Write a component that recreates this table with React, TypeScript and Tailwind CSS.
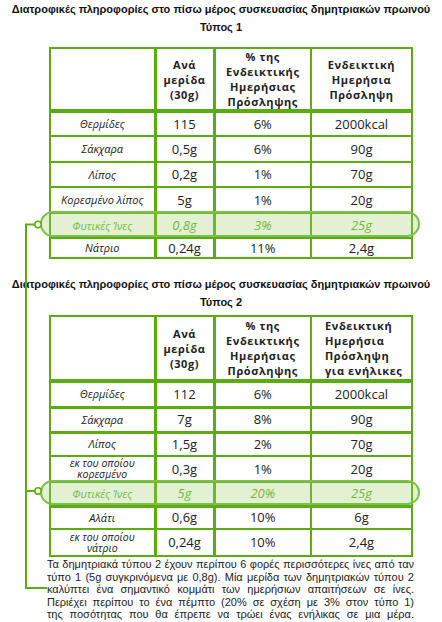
const G = '#5aac0f'

type Row = { label: string; small?: boolean; a: string; b: string; c: string; fiber?: boolean; h: number; thick?: boolean }

const rows1: Row[] = [
  { label: 'Θερμίδες', a: '115', b: '6%', c: '2000kcal', h: 25 },
  { label: 'Σάκχαρα', a: '0,5g', b: '6%', c: '90g', h: 26 },
  { label: 'Λίπος', a: '0,2g', b: '1%', c: '70g', h: 25 },
  { label: 'Κορεσμένο λίπος', a: '5g', b: '1%', c: '20g', h: 26 },
  { label: 'Φυτικές Ίνες', a: '0,8g', b: '3%', c: '25g', h: 25, fiber: true },
  { label: 'Νάτριο', a: '0,24g', b: '11%', c: '2,4g', h: 20 },
]

const rows2: Row[] = [
  { label: 'Θερμίδες', a: '112', b: '6%', c: '2000kcal', h: 26 },
  { label: 'Σάκχαρα', a: '7g', b: '8%', c: '90g', h: 25, thick: true },
  { label: 'Λίπος', a: '1,5g', b: '2%', c: '70g', h: 24, thick: true },
  { label: 'εκ του οποίου κορεσμένο', small: true, a: '0,3g', b: '1%', c: '20g', h: 26 },
  { label: 'Φυτικές Ίνες', a: '5g', b: '20%', c: '25g', h: 24, fiber: true },
  { label: 'Αλάτι', a: '0,6g', b: '10%', c: '6g', h: 23, thick: true },
  { label: 'εκ του οποίου νάτριο', small: true, a: '0,24g', b: '10%', c: '2,4g', h: 27 },
]

function Title({ n }: { n: number }) {
  return (
    <div className="whitespace-nowrap text-center font-['Liberation_Sans',sans-serif] text-[11px] font-bold leading-[18px] text-[#111]">
      <div>Διατροφικές πληροφορίες στο πίσω μέρος συσκευασίας δημητριακών πρωινού</div>
      <div>Τύπος {n}</div>
    </div>
  )
}

function NutritionTable({
  rows,
  header,
  headH,
  pillTop,
  leftLast,
}: {
  rows: Row[]
  header: string[][]
  headH: number
  pillTop: number
  leftLast?: boolean
}) {
  const fiberH = rows.find((r) => r.fiber)?.h ?? 25
  return (
    <div className="relative ml-[49px] w-[362px]">
      <table className="w-[362px] table-fixed border-collapse border-2 border-[#5aac0f] text-[#222]">
        <colgroup>
          <col className="w-[105px]" />
          <col className="w-[59px]" />
          <col className="w-[97px]" />
          <col className="w-[101px]" />
        </colgroup>
        <thead>
          <tr style={{ height: headH }}>
            <th className="border-2 border-b-4 border-r-[3px] border-[#5aac0f] p-0"></th>
            {header.map((lines, i) => (
              <th
                key={i}
                className={`border-2 border-b-4 border-[#5aac0f] p-0 align-middle text-[11px] font-bold leading-[15px] tracking-[0.6px] ${
                  i === 0 ? 'border-r-[3px]' : ''
                } ${leftLast && i === 2 ? 'pl-[13px] text-left' : ''}`}
              >
                {lines.map((l) => (
                  <div key={l}>{l}</div>
                ))}
              </th>
            ))}
          </tr>
        </thead>
        <tbody>
          {rows.map((r) => (
            <tr key={r.label} style={{ height: r.h }}>
              <td
                className={`border-2 border-r-[3px] border-[#5aac0f] p-0 text-center italic ${r.thick ? 'border-t-[3px]' : ''} ${
                  r.small ? 'text-[10.5px] leading-[11px]' : 'text-[11px] leading-[14px]'
                } ${r.fiber ? 'text-[#6aad3c]' : ''}`}
              >
                {r.small ? (
                  <>
                    <div>{r.label.split(' ').slice(0, -1).join(' ')}</div>
                    <div>{r.label.split(' ').slice(-1)[0]}</div>
                  </>
                ) : (
                  r.label
                )}
              </td>
              {[r.a, r.b, r.c].map((v, i) => (
                <td
                  key={i}
                  className={`border-2 border-[#5aac0f] p-0 text-center text-[13px] leading-[15px] ${r.thick ? 'border-t-[3px]' : ''} ${i === 0 ? 'border-r-[3px]' : ''} ${
                    r.fiber ? 'italic text-[#5fa82a]' : ''
                  }`}
                >
                  {v}
                </td>
              ))}
            </tr>
          ))}
        </tbody>
      </table>
      <div
        className="pointer-events-none absolute left-[-9px] right-[-9px] rounded-full border-2 border-[#7cc04a] bg-[#9ed26a]/30"
        style={{ top: pillTop, height: fiberH + 1 }}
      />
    </div>
  )
}

const para = [
  'Τα δημητριακά τύπου 2 έχουν περίπου 6 φορές περισσότερες ίνες από ταν',
  'τύπο 1 (5g συγκρινόμενα με 0,8g). Μία μερίδα των δημητριακών τύπου 2',
  'καλύπτει ένα σημαντικό κομμάτι των ημερήσιων απαιτήσεων σε ίνες.',
  'Περιέχει περίπου το ένα πέμπτο (20% σε σχέση με 3% στον τύπο 1)',
  'της ποσότητας που θα έπρεπε να τρώει ένας ενήλικας σε μια μέρα.',
]

export default function App() {
  return (
    <div className="relative h-[622px] w-[442px] overflow-hidden bg-white font-['Open_Sans',sans-serif]">
      <Title n={1} />
      <div className="mt-[11px]">
        <NutritionTable
          rows={rows1}
          headH={63}
          pillTop={164}
          header={[
            ['Ανά', 'μερίδα', '(30g)'],
            ['% της', 'Ενδεικτικής', 'Ημερήσιας', 'Πρόσληψης'],
            ['Ενδεικτική', 'Ημερήσια', 'Πρόσληψη'],
          ]}
        />
      </div>
      <div className="mt-[16px]">
        <Title n={2} />
      </div>
      <div className="mt-[4px]">
        <NutritionTable
          rows={rows2}
          headH={65}
          pillTop={165}
          leftLast
          header={[
            ['Ανά', 'μερίδα', '(30g)'],
            ['% της', 'Ενδεικτικής', 'Ημερήσιας', 'Πρόσληψης'],
            ['Ενδεικτική', 'Ημερήσια', 'Πρόσληψη', 'για ενήλικες'],
          ]}
        />
      </div>
      <div className="ml-[47px] mt-[1px] w-[367px] font-['Liberation_Sans',sans-serif] text-[11px] leading-[12.5px] text-[#222]">
        {para.map((l) => (
          <div key={l} className="text-justify [text-align-last:justify]">
            {l}
          </div>
        ))}
      </div>
      <svg className="pointer-events-none absolute left-0 top-0" width="442" height="622">
        <path d="M35 224.5 H26 V588 H47" fill="none" stroke={G} strokeWidth="2" />
        <path d="M26 491 H35" fill="none" stroke={G} strokeWidth="2" />
        <circle cx="38" cy="224.5" r="3.2" fill="white" stroke={G} strokeWidth="1.5" />
        <circle cx="38" cy="491" r="3.2" fill="white" stroke={G} strokeWidth="1.5" />
      </svg>
    </div>
  )
}
